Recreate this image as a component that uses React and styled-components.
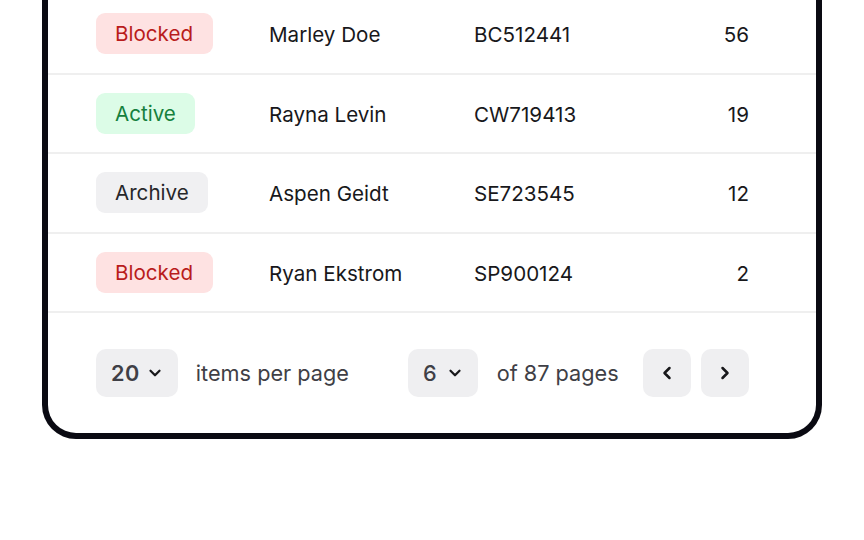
import React from "react"
import styled, { createGlobalStyle } from "styled-components"
import { ChevronDown, ChevronLeft, ChevronRight } from "lucide-react"

const GlobalStyle = createGlobalStyle`
    html, body {
        margin: 0;
        padding: 0;
        background: #ffffff;
        font-family: Inter, "Noto Sans", "Liberation Sans", sans-serif;
        overflow: hidden;
    }
`

const Page = styled.div`
    width: 864px;
    height: 540px;
    padding: 0 42px;
    box-sizing: border-box;
    overflow: hidden;
`

const Card = styled.div`
    margin-top: -5px;
    border: 6px solid #0a0a12;
    border-top: none;
    border-radius: 0 0 34px 34px;
    background: #fff;
`

const Row = styled.div`
    display: grid;
    grid-template-columns: 173px 205px 1fr auto;
    align-items: center;
    height: 77.5px;
    padding: 0 67px 0 48px;
    border-bottom: 2px solid #efefef;
    font-size: 20.6px;
    color: #18181b;
`

const tones = {
    blocked: { bg: "#fee2e2", fg: "#b91c1c" },
    active: { bg: "#dcfce7", fg: "#15803d" },
    archive: { bg: "#f0f0f2", fg: "#27272a" },
}

const Badge = styled.span`
    justify-self: start;
    display: inline-flex;
    align-items: center;
    height: 41px;
    padding: 0 19.5px 0 19px;
    border-radius: 9px;
    background: ${p => tones[p.$tone].bg};
    color: ${p => tones[p.$tone].fg};
    font-size: 20.6px;
`

const Cell = styled.span`
    white-space: nowrap;
    padding-top: 2px;
`

const Count = styled.span`
    text-align: right;
    padding-top: 2px;
`

const Footer = styled.div`
    display: flex;
    align-items: center;
    height: 120px;
    padding: 0 67px 0 48px;
    font-size: 21.7px;
    color: #3f3f46;
`

const Select = styled.div`
    display: flex;
    align-items: center;
    gap: ${p => (p.$bold ? 6 : 9)}px;
    height: 48px;
    padding: 0 14px 0 15px;
    box-sizing: border-box;
    border-radius: 10px;
    background: #efeff1;
    font-weight: ${p => (p.$bold ? 600 : 500)};
    letter-spacing: ${p => (p.$bold ? "0.5px" : "0")};
    color: #3f3f46;
`

const Label = styled.span`
    margin-left: ${p => p.$before}px;
    margin-right: ${p => p.$after}px;
    white-space: nowrap;
`

const PagerButtons = styled.div`
    display: flex;
    gap: 10px;
`

const IconButton = styled.div`
    width: 48px;
    height: 48px;
    display: flex;
    align-items: center;
    justify-content: center;
    border-radius: 10px;
    background: #efeff1;
    color: #18181b;
`

const rows = [
    { status: "blocked", label: "Blocked", name: "Marley Doe", id: "BC512441", count: 56 },
    { status: "active", label: "Active", name: "Rayna Levin", id: "CW719413", count: 19 },
    { status: "archive", label: "Archive", name: "Aspen Geidt", id: "SE723545", count: 12 },
    { status: "blocked", label: "Blocked", name: "Ryan Ekstrom", id: "SP900124", count: 2 },
]

export default function App() {
    return (
        <>
            <GlobalStyle />
            <Page>
                <Card>
                    {rows.map(r => (
                        <Row key={r.id}>
                            <Badge $tone={r.status}>{r.label}</Badge>
                            <Cell>{r.name}</Cell>
                            <Cell>{r.id}</Cell>
                            <Count>{r.count}</Count>
                        </Row>
                    ))}
                    <Footer>
                        <Select $bold>
                            20 <ChevronDown size={18} strokeWidth={3} color="#18181b" />
                        </Select>
                        <Label $before={18} $after={59}>items per page</Label>
                        <Select>
                            6 <ChevronDown size={18} strokeWidth={3} color="#18181b" />
                        </Select>
                        <Label $before={19} $after={24}>of 87 pages</Label>
                        <PagerButtons>
                            <IconButton><ChevronLeft size={20} strokeWidth={3} /></IconButton>
                            <IconButton><ChevronRight size={20} strokeWidth={3} /></IconButton>
                        </PagerButtons>
                    </Footer>
                </Card>
            </Page>
        </>
    )
}
